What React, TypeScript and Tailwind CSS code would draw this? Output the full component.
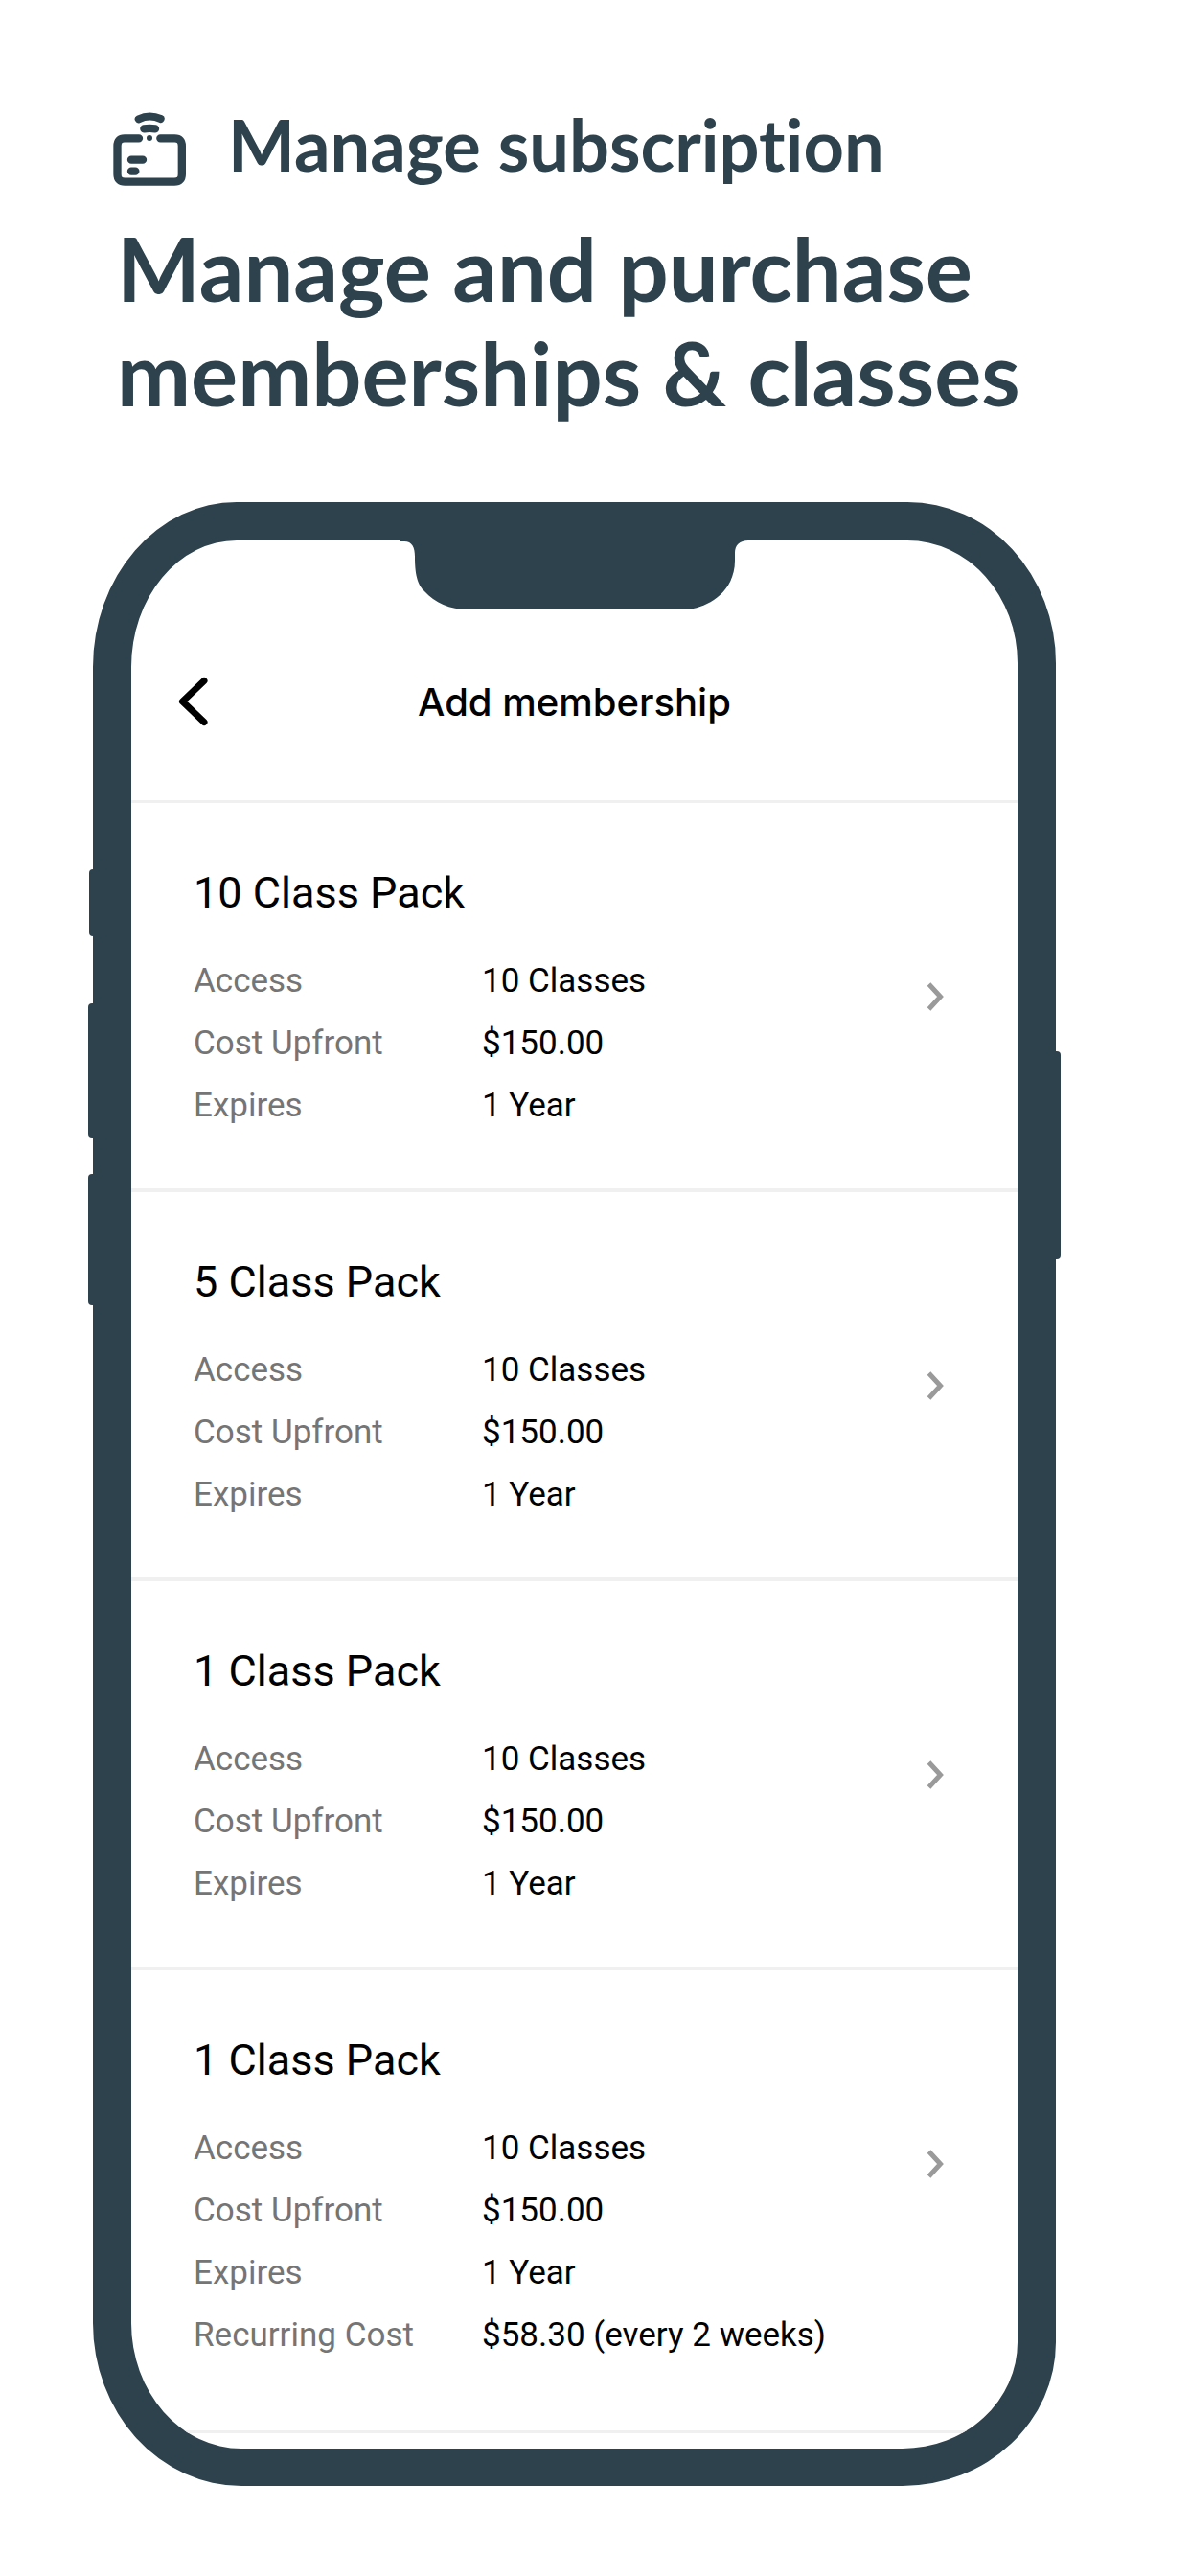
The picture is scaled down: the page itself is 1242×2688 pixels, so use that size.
type Detail = { label: string; value: string };
type Membership = { title: string; details: Detail[] };

const baseDetails: Detail[] = [
  { label: "Access", value: "10 Classes" },
  { label: "Cost Upfront", value: "$150.00" },
  { label: "Expires", value: "1 Year" },
];

const memberships: Membership[] = [
  { title: "10 Class Pack", details: baseDetails },
  { title: "5 Class Pack", details: baseDetails },
  { title: "1 Class Pack", details: baseDetails },
  {
    title: "1 Class Pack",
    details: [...baseDetails, { label: "Recurring Cost", value: "$58.30 (every 2 weeks)" }],
  },
];

function CardIcon() {
  return (
    <svg
      viewBox="84 81 228 231"
      className="mt-2 h-[77px] w-[76px] shrink-0"
      fill="none"
      stroke="currentColor"
      strokeWidth="25"
      strokeLinecap="round"
      aria-hidden="true"
    >
      <path d="M165 163H120Q97.500 163 97.500 187V275Q97.500 299 121 299H276Q299.500 299 299.500 275V187Q299.500 163 277 163H232" />
      <path d="M164 103Q198 86 233 102" strokeWidth="24" />
      <path d="M181 133Q198 130 216 133" strokeWidth="25" />
      <circle cx="198" cy="162" r="9" fill="currentColor" stroke="none" />
      <path d="M141 230H177M141 266H154" />
    </svg>
  );
}

function BackIcon() {
  return (
    <svg
      viewBox="0 0 31 52"
      className="h-[52px] w-[31px]"
      fill="none"
      stroke="currentColor"
      strokeWidth="7"
      strokeLinecap="round"
      strokeLinejoin="round"
      aria-hidden="true"
    >
      <path d="M27 4.500L4.500 26L27 47.500" />
    </svg>
  );
}

function ChevronIcon() {
  return (
    <svg
      viewBox="0 0 18 30"
      className="mt-[121px] h-[30px] w-[18px] shrink-0 text-[#9a9a9a]"
      fill="none"
      stroke="currentColor"
      strokeWidth="5"
      aria-hidden="true"
    >
      <path d="M2.500 2L14.500 15L2.500 28" />
    </svg>
  );
}

function MembershipRow({ title, details }: Membership) {
  return (
    <li className="border-b-4 border-[#f0f0f0] pb-[54px] last:border-b-3 last:pb-[67px]">
      <a href="#membership" className="flex items-start pt-[66px] pr-[77px] pl-[65px]">
        <div className="flex-1">
          <h3 className="text-[45px] leading-[56px]">{title}</h3>
          <dl className="mt-[31px] grid grid-cols-[301px_1fr] text-[35px] leading-[65px]">
            {details.map((d) => (
              <div key={d.label} className="contents">
                <dt className="text-[#757575]">{d.label}</dt>
                <dd className="whitespace-nowrap">{d.value}</dd>
              </div>
            ))}
          </dl>
        </div>
        <ChevronIcon />
      </a>
    </li>
  );
}

export default function App() {
  return (
    <main className="min-h-screen bg-white pt-[109px] pb-[94px] text-[#2d424d]">
      <header className="pr-[100px] pl-[118px] font-['Lato','Open_Sans',sans-serif] font-bold [font-variant-ligatures:none]">
        <div className="flex items-start gap-[44px]">
          <CardIcon />
          <p className="text-[74px] leading-[84px] whitespace-nowrap">Manage subscription</p>
        </div>
        <h1 className="mt-[31px] pl-[4px] text-[92px] leading-[109px]">
          Manage and purchase
          <br />
          memberships &amp; classes
        </h1>
      </header>

      <section
        aria-label="Phone preview"
        className="relative mt-[81px] mr-[140px] ml-[97px]"
      >
        <span className="absolute top-[383px] left-[-4px] h-[70px] w-4 rounded-[4px] bg-[#2d424d]" />
        <span className="absolute top-[523px] left-[-5px] h-[140px] w-4 rounded-[4px] bg-[#2d424d]" />
        <span className="absolute top-[701px] left-[-5px] h-[137px] w-4 rounded-[4px] bg-[#2d424d]" />
        <span className="absolute top-[573px] right-[-5px] h-[217px] w-4 rounded-[4px] bg-[#2d424d]" />

        <div className="relative overflow-hidden rounded-[150px_155px_160px_155px/172px_168px_150px_170px] border-40 border-b-39 border-[#2d424d] bg-white font-[Roboto,sans-serif] text-black">
          <svg
            viewBox="0 0 366 74"
            className="absolute top-[-1px] left-1/2 w-[366px] -translate-x-1/2 text-[#2d424d]"
            fill="currentColor"
            aria-hidden="true"
          >
            <path d="M0 0V2H5C13 2 16 8 16 18C16 40 20 48 26 54C37 66 52 73 72 73H297C316 73 350 58 350 22V14C350 6 355 1 364 1V0Z" />
          </svg>

          <div className="grid h-[274px] grid-cols-[1fr_auto_1fr] items-start border-b-3 border-[#f0f0f0] px-[49px] pt-[142px]">
            <button type="button" aria-label="Back" className="w-fit">
              <BackIcon />
            </button>
            <h2 className="font-[Inter,sans-serif] text-[40px] leading-[54px] font-medium">
              Add membership
            </h2>
          </div>

          <ul className="pb-4">
            {memberships.map((m, i) => (
              <MembershipRow key={i} {...m} />
            ))}
          </ul>
        </div>
      </section>
    </main>
  );
}
